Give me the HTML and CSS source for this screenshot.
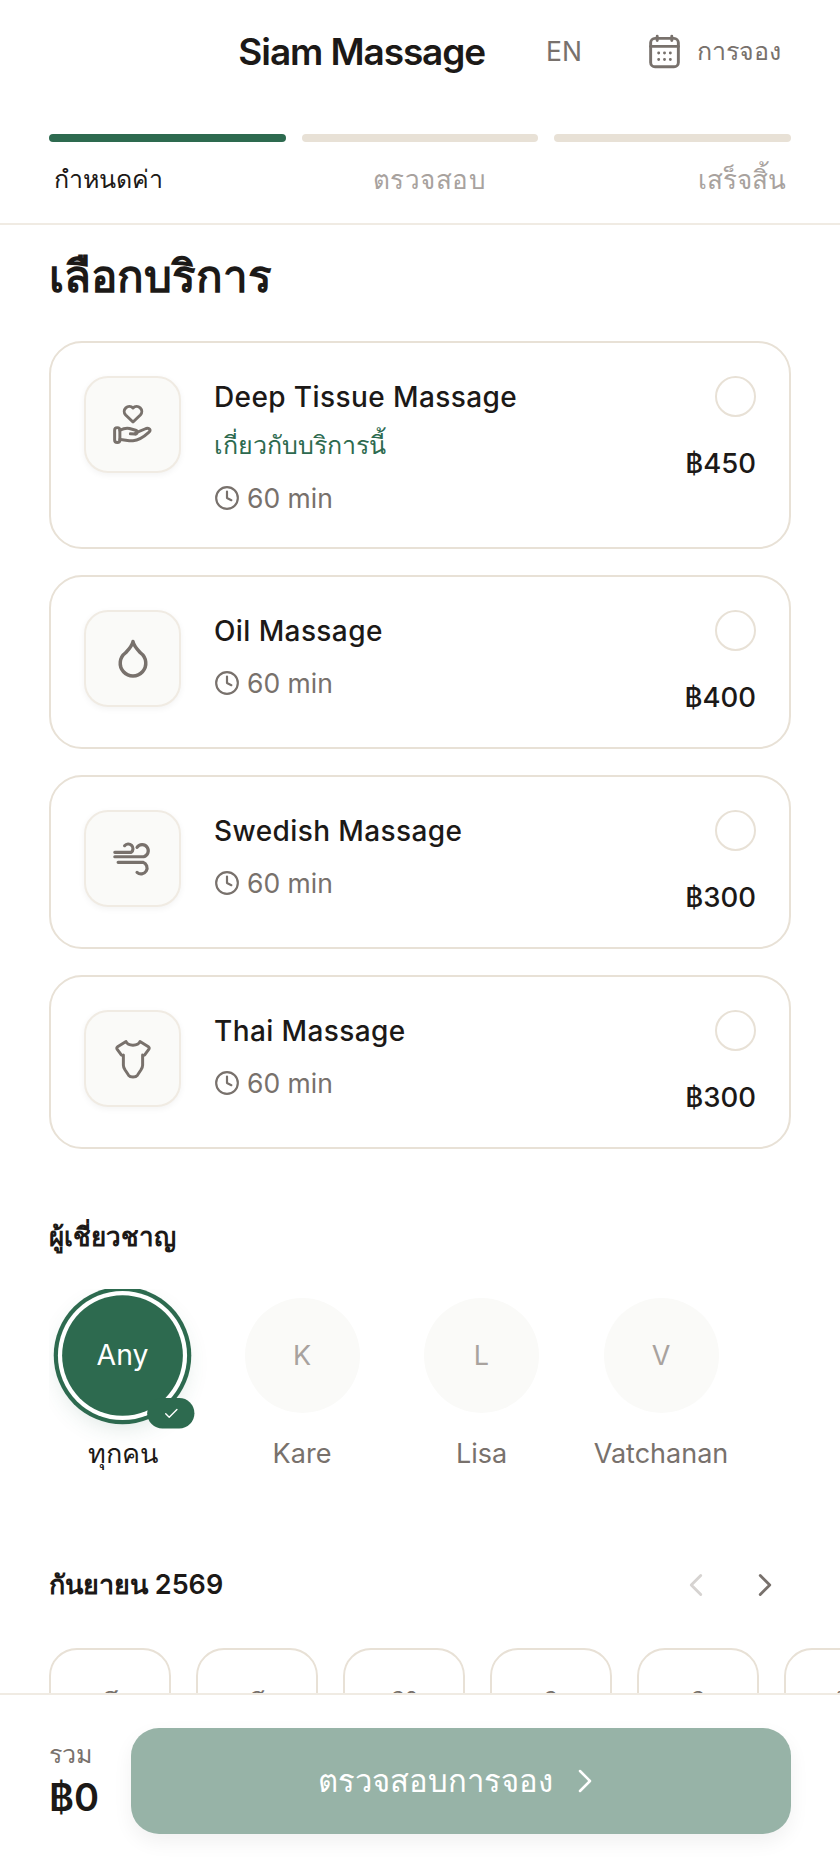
FILE: index.html
```html
<!DOCTYPE html>
<html lang="th">
<head>
    <meta charset="UTF-8">
    <meta name="viewport" content="width=device-width, initial-scale=1.0">
    <title>Siam Massage</title>
    <link rel="stylesheet" href="styles.css">
</head>
<body>
    <header class="top">
        <div class="top-bar">
            <h1 class="brand">Siam Massage</h1>
            <span class="lang">EN</span>
            <a class="bookings">
                <svg class="cal-icon" viewBox="0 0 24 24" fill="none" stroke="currentColor" stroke-width="2" stroke-linecap="round" stroke-linejoin="round"><path d="M7 1.500v3M17 1.500v3"/><rect x="2.500" y="3" width="19" height="19.500" rx="3"/><path d="M2.500 8.500h19"/><path d="M8 13h.01M12 13h.01M16 13h.01M8 17.500h.01M12 17.500h.01M16 17.500h.01"/></svg>
                <span>การจอง</span>
            </a>
        </div>
        <div class="steps">
            <div class="step active"><div class="step-bar"></div><span>กำหนดค่า</span></div>
            <div class="step center"><div class="step-bar"></div><span>ตรวจสอบ</span></div>
            <div class="step end"><div class="step-bar"></div><span>เสร็จสิ้น</span></div>
        </div>
    </header>

    <main class="content">
        <h2 class="page-title">เลือกบริการ</h2>

        <div class="services">
            <div class="card">
                <div class="card-icon">
                    <svg viewBox="0 0 24 24" fill="none" stroke="currentColor" stroke-width="1.700" stroke-linecap="round" stroke-linejoin="round"><path d="M12 10.300 7.800 6.300a2.900 2.900 0 0 1 4.200-4 2.900 2.900 0 0 1 4.200 4z"/><rect x="1.500" y="13.500" width="3" height="8.500" rx="1.500"/><path d="M4.500 15c2-1 3.500-1.500 5.500-1l3.500 1c1.300.4 1 2.500-.5 2.200l-2.500-.2"/><path d="M13.500 16.500l6-2.500c1.800-.7 3 1 1.500 2.200-2.500 2.300-5.500 4.500-9 4.800-2.500.2-5-.7-7.500-.7"/></svg>
                </div>
                <div class="card-body">
                    <div class="card-name">Deep Tissue Massage</div>
                    <a class="card-link">เกี่ยวกับบริการนี้</a>
                    <div class="card-time">
                        <svg viewBox="0 0 24 24" fill="none" stroke="currentColor" stroke-width="2" stroke-linecap="round" stroke-linejoin="round"><circle cx="12" cy="12" r="10"/><path d="M12 6v6l4 2"/></svg>
                        60 min
                    </div>
                </div>
                <div class="card-side"><span class="radio"></span><span class="price">฿450</span></div>
            </div>

            <div class="card">
                <div class="card-icon">
                    <svg viewBox="0 0 24 24" fill="none" stroke="currentColor" stroke-width="2" stroke-linecap="round" stroke-linejoin="round"><path d="M12 2c.4 2.500 2.200 4.300 4.300 6.500A7.300 7.300 0 1 1 7.700 8.500C9.800 6.300 11.600 4.500 12 2z"/></svg>
                </div>
                <div class="card-body">
                    <div class="card-name">Oil Massage</div>
                    <div class="card-time">
                        <svg viewBox="0 0 24 24" fill="none" stroke="currentColor" stroke-width="2" stroke-linecap="round" stroke-linejoin="round"><circle cx="12" cy="12" r="10"/><path d="M12 6v6l4 2"/></svg>
                        60 min
                    </div>
                </div>
                <div class="card-side"><span class="radio"></span><span class="price">฿400</span></div>
            </div>

            <div class="card">
                <div class="card-icon">
                    <svg viewBox="0 0 24 24" fill="none" stroke="currentColor" stroke-width="1.800" stroke-linecap="round" stroke-linejoin="round"><path d="M1.600 8.200H11a2.700 2.700 0 1 0-3.800-3.800"/><path d="M1.600 10.700h16.500a3.500 3.500 0 1 0-3.800-5.300"/><path d="M3.500 13.900h14.200a3.400 3.400 0 1 1-3.400 5.700"/></svg>
                </div>
                <div class="card-body">
                    <div class="card-name">Swedish Massage</div>
                    <div class="card-time">
                        <svg viewBox="0 0 24 24" fill="none" stroke="currentColor" stroke-width="2" stroke-linecap="round" stroke-linejoin="round"><circle cx="12" cy="12" r="10"/><path d="M12 6v6l4 2"/></svg>
                        60 min
                    </div>
                </div>
                <div class="card-side"><span class="radio"></span><span class="price">฿300</span></div>
            </div>

            <div class="card">
                <div class="card-icon">
                    <svg viewBox="0 0 24 24" fill="none" stroke="currentColor" stroke-width="1.700" stroke-linecap="round" stroke-linejoin="round"><path d="M8 2 3.200 5a1 1 0 0 0-.3 1.400l2.400 3.200a.8.8 0 0 0 1.200.1v5.800c0 1.200.5 2 1 2.800l2 3c.5.7 1 1 2.500 1s2-.3 2.500-1l2-3c.5-.8 1-1.600 1-2.800V9.700a.8.8 0 0 0 1.200-.1l2.400-3.200a1 1 0 0 0-.3-1.400L16 2c-1.200 2.800-6.800 2.800-8 0z"/></svg>
                </div>
                <div class="card-body">
                    <div class="card-name">Thai Massage</div>
                    <div class="card-time">
                        <svg viewBox="0 0 24 24" fill="none" stroke="currentColor" stroke-width="2" stroke-linecap="round" stroke-linejoin="round"><circle cx="12" cy="12" r="10"/><path d="M12 6v6l4 2"/></svg>
                        60 min
                    </div>
                </div>
                <div class="card-side"><span class="radio"></span><span class="price">฿300</span></div>
            </div>
        </div>

        <h3 class="section-title">ผู้เชี่ยวชาญ</h3>
        <div class="staff">
            <div class="person selected">
                <div class="avatar">Any<span class="tick"><svg viewBox="0 0 24 24" fill="none" stroke="currentColor" stroke-width="2" stroke-linecap="round" stroke-linejoin="round"><path d="M20 6 9 17l-5-5"/></svg></span></div>
                <span class="person-name">ทุกคน</span>
            </div>
            <div class="person"><div class="avatar">K</div><span class="person-name">Kare</span></div>
            <div class="person"><div class="avatar">L</div><span class="person-name">Lisa</span></div>
            <div class="person"><div class="avatar">V</div><span class="person-name">Vatchanan</span></div>
        </div>

        <div class="month-row">
            <h3 class="month">กันยายน 2569</h3>
            <div class="month-nav">
                <svg class="off" viewBox="0 0 24 24" fill="none" stroke="currentColor" stroke-width="1.800" stroke-linecap="round" stroke-linejoin="round"><path d="m15 18-6-6 6-6"/></svg>
                <svg viewBox="0 0 24 24" fill="none" stroke="currentColor" stroke-width="1.800" stroke-linecap="round" stroke-linejoin="round"><path d="m9 18 6-6-6-6"/></svg>
            </div>
        </div>
        <div class="days">
            <div class="day">ศ</div>
            <div class="day">ส</div>
            <div class="day">อา</div>
            <div class="day">จ</div>
            <div class="day">อ</div>
            <div class="day">พ</div>
        </div>
    </main>

    <footer class="bottom">
        <div class="total">
            <span class="total-label">รวม</span>
            <span class="total-value">฿0</span>
        </div>
        <button class="next-btn" type="button">
            ตรวจสอบการจอง
            <svg viewBox="0 0 24 24" fill="none" stroke="currentColor" stroke-width="1.500" stroke-linecap="round" stroke-linejoin="round"><path d="m9 18 6-6-6-6"/></svg>
        </button>
    </footer>
</body>
</html>
```

FILE: styles.css
```css
* {
    margin: 0;
    padding: 0;
    box-sizing: border-box;
}

body {
    font-family: 'Inter', 'Noto Sans', sans-serif;
    background: #fff;
    color: #1c1917;
    height: 100vh;
    display: flex;
    flex-direction: column;
    overflow: hidden;
}

.top {
    flex: none;
    height: 225px;
    padding: 0 49px;
    border-bottom: 2px solid #f0ebe3;
}

.top-bar {
    height: 102px;
    display: flex;
    align-items: center;
    justify-content: flex-end;
}

.brand {
    font-size: 37px;
    font-weight: 600;
    letter-spacing: -1.100px;
    margin-right: 61px;
}

.lang {
    font-size: 26.500px;
    font-weight: 400;
    color: #78716c;
    margin-right: 65px;
}

.bookings {
    display: flex;
    align-items: center;
    gap: 15px;
    color: #78716c;
    font-size: 25px;
    font-weight: 500;
    margin-right: 10px;
}

.cal-icon {
    width: 35px;
    height: 35px;
}

.steps {
    display: flex;
    gap: 16px;
    margin-top: 32px;
}

.step {
    flex: 1;
    display: flex;
    flex-direction: column;
    gap: 17px;
    font-size: 26px;
    font-weight: 500;
    color: #a8a29e;
}

.step span {
    padding: 0 5px;
}

.step.center {
    text-align: center;
    letter-spacing: 0.5px;
}

.step.center span {
    padding-left: 24px;
}

.step.end { text-align: right; }

.step.active {
    color: #1c1917;
    font-size: 25px;
}

.step-bar {
    height: 8px;
    border-radius: 4px;
    background: #e8e1d6;
}

.step.active .step-bar { background: #2d6a4f; }

.content {
    flex: 1;
    min-height: 0;
    overflow: hidden;
    padding: 0 49px;
}

.page-title {
    font-size: 44px;
    font-weight: 600;
    margin-top: 21px;
    line-height: 60px;
}

.services {
    display: flex;
    flex-direction: column;
    gap: 26px;
    margin-top: 35px;
}

.card {
    display: flex;
    border: 2px solid #e8e1d6;
    border-radius: 33px;
    padding: 33px 33px 29px;
}

.card-icon {
    flex: none;
    width: 97px;
    height: 97px;
    border-radius: 24px;
    background: #fafaf8;
    border: 2px solid #f0ebe3;
    box-shadow: 0 2px 6px rgba(0, 0, 0, 0.05);
    color: #78716c;
    display: flex;
    align-items: center;
    justify-content: center;
    margin-right: 33px;
}

.card-icon svg {
    width: 42px;
    height: 42px;
}

.card-body {
    flex: 1;
    min-width: 0;
    padding-top: 1px;
}

.card-name {
    font-size: 28px;
    font-weight: 500;
    letter-spacing: 0.4px;
    line-height: 40px;
}

.card-link {
    display: block;
    color: #2d6a4f;
    font-size: 25px;
    line-height: 38px;
    margin: 9px 0 14px;
}

.card-time {
    display: flex;
    align-items: center;
    gap: 7px;
    color: #78716c;
    font-size: 26.500px;
    line-height: 40px;
    margin-top: 12px;
}

.card-time svg {
    width: 26px;
    height: 26px;
}

.card-side {
    display: flex;
    flex-direction: column;
    align-items: flex-end;
    gap: 30px;
    padding-bottom: 5px;
}

.radio {
    width: 41px;
    height: 41px;
    border-radius: 50%;
    border: 2px solid #e8e1d6;
}

.price {
    font-size: 27.500px;
    font-weight: 500;
    line-height: 32px;
}

.section-title {
    font-size: 26px;
    font-weight: 600;
    margin-top: 67px;
}

.staff {
    display: flex;
    gap: 64.500px;
    margin-top: 32px;
    padding: 9px 0 0 16px;
    height: 220px;
    overflow: hidden;
}

.person {
    flex: none;
    width: 115px;
    display: flex;
    flex-direction: column;
    align-items: center;
    gap: 25px;
    color: #78716c;
    font-size: 27px;
    line-height: 32px;
}

.person-name {
    white-space: nowrap;
}

.avatar {
    position: relative;
    width: 115px;
    height: 115px;
    border-radius: 50%;
    background: #fafaf8;
    color: #a8a29e;
    display: flex;
    align-items: center;
    justify-content: center;
}

.person.selected { color: #1c1917; }

.person.selected .avatar {
    background: #2d6a4f;
    color: #fff;
    transform: scale(1.05);
    box-shadow: 0 0 0 4px #fff, 0 0 0 8px #2d6a4f, 0 8px 24px rgba(45, 106, 79, 0.2);
}

.tick {
    position: absolute;
    right: -11px;
    bottom: -12px;
    width: 45px;
    height: 29px;
    border-radius: 15px;
    background: #2d6a4f;
    color: #fff;
    display: flex;
    align-items: center;
    justify-content: center;
}

.tick svg {
    width: 16px;
    height: 16px;
}

.month-row {
    display: flex;
    align-items: center;
    justify-content: space-between;
    margin-top: 54px;
}

.month {
    font-size: 27px;
    font-weight: 600;
}

.month-nav {
    display: flex;
    gap: 31px;
    margin-right: 7px;
    color: #78716c;
}

.month-nav svg {
    width: 38px;
    height: 38px;
}

.month-nav .off {
    color: #d6d3d1;
}

.days {
    display: flex;
    gap: 25px;
    margin-top: 42px;
    width: 900px;
}

.day {
    flex: none;
    width: 122px;
    height: 150px;
    border: 2px solid #e8e1d6;
    border-radius: 28px;
    padding-top: 27px;
    text-align: center;
    font-size: 24px;
    color: #78716c;
}

.bottom {
    flex: none;
    height: 173px;
    border-top: 2px solid #f0ebe3;
    background: #fff;
    padding: 33px 49px;
    display: flex;
    align-items: flex-start;
    gap: 32px;
}

.total {
    display: flex;
    flex-direction: column;
    padding-top: 6px;
}

.total-label {
    font-size: 25px;
    color: #78716c;
}

.total-value {
    font-size: 38px;
    font-weight: 600;
}

.next-btn {
    flex: 1;
    height: 106px;
    border: none;
    border-radius: 28px;
    background: #97b3a7;
    color: #fff;
    font-family: inherit;
    font-size: 31px;
    font-weight: 500;
    box-shadow: 0 8px 20px rgba(0, 0, 0, 0.06);
    display: flex;
    align-items: center;
    justify-content: center;
    gap: 12px;
}

.next-btn svg {
    width: 40px;
    height: 40px;
}
```
